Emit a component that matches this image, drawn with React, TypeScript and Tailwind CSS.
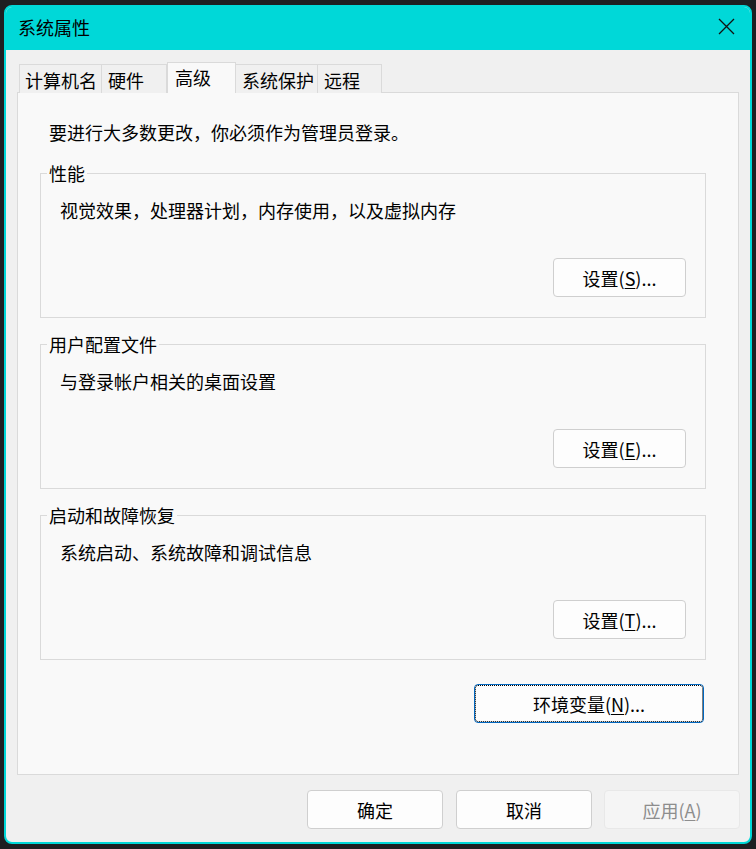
import React from "react";

const FONT = '"Noto Sans CJK SC", "Microsoft YaHei", sans-serif';

const TABS = [
  { label: "计算机名", w: "w-[83px]" },
  { label: "硬件", w: "w-[65px]" },
  { label: "高级", w: "w-[69px]", active: true },
  { label: "系统保护", w: "w-[82px]" },
  { label: "远程", w: "w-[64px]" },
];

const GROUPS = [
  { title: "性能", desc: "视觉效果，处理器计划，内存使用，以及虚拟内存", key: "S" },
  { title: "用户配置文件", desc: "与登录帐户相关的桌面设置", key: "E" },
  { title: "启动和故障恢复", desc: "系统启动、系统故障和调试信息", key: "T" },
];

function Mnemonic({ text, k }: { text: string; k: string }) {
  return (
    <>
      {text}(<span className="underline underline-offset-2">{k}</span>)
    </>
  );
}

export default function App() {
  return (
    <div
      className="w-[756px] h-[849px] bg-[#1e1f22] pl-[4px] pt-[5px] overflow-hidden text-black"
      style={{ fontFamily: FONT }}
    >
      <div className="w-[748px] h-[839px] border-2 border-[#00d8d8] rounded-[8px] overflow-hidden flex flex-col bg-[#f0f0f0]">
        {/* title bar */}
        <div className="h-[43px] shrink-0 bg-[#00d8d8] flex items-center justify-between pl-[12px] pr-[15px] pb-[4px]">
          <span className="text-[18px] leading-[24px]">系统属性</span>
          <svg width="17" height="17" viewBox="0 0 17 17" fill="none" stroke="#111" strokeWidth="1.3">
            <path d="M1 1 L16 16 M16 1 L1 16" />
          </svg>
        </div>

        {/* tabs */}
        <div className="flex items-end h-[31px] mt-[12px] ml-[13px] -mb-px relative z-10">
          {TABS.map((t) =>
            t.active ? (
              <div
                key={t.label}
                className={`${t.w} h-[31px] bg-[#f9f9f9] border border-b-0 border-[#dadada] pl-[7px] pt-[2px] text-[18px] leading-[24px]`}
              >
                {t.label}
              </div>
            ) : (
              <div
                key={t.label}
                className={`${t.w} h-[29px] border border-l-0 first:border-l first:pl-[5px] border-b-0 border-[#dadada] bg-[#f0f0f0] pl-[6px] pt-[3px] text-[18px] leading-[24px]`}
              >
                {t.label}
              </div>
            )
          )}
        </div>

        {/* panel */}
        <div className="ml-[11px] w-[722px] h-[683px] shrink-0 bg-[#f9f9f9] border border-[#dadada] pt-[27px] pl-[31px] pr-[33px]">
          <p className="text-[18px] leading-[24px]">要进行大多数更改，你必须作为管理员登录。</p>

          <div className="ml-[-9px] flex flex-col">
            {GROUPS.map((g, i) => (
              <fieldset
                key={g.title}
                className={`${i === 0 ? "mt-[17px]" : "mt-[14px]"} w-[666px] border border-[#dadada]`}
              >
                <legend className="ml-[6px] px-[2px] text-[18px] leading-[24px]">{g.title}</legend>
                <div className="px-[19px] pb-[20px]">
                  <p className="mt-[13px] text-[18px] leading-[24px]">{g.desc}</p>
                  <div className="mt-[36px] flex justify-end">
                    <button className="w-[133px] h-[39px] rounded-[4px] border border-[#cfcfcf] bg-[#fdfdfd] text-[18px] leading-[24px]">
                      <Mnemonic text="设置" k={g.key} />...
                    </button>
                  </div>
                </div>
              </fieldset>
            ))}

            <div className="mt-[24px] w-[666px] flex justify-end pr-[2px]">
              <button className="w-[230px] h-[39px] rounded-[4px] border border-[#0067c0] bg-[#fdfdfd] outline-1 outline-dotted outline-black -outline-offset-2 text-[18px] leading-[24px]">
                <Mnemonic text="环境变量" k="N" />...
              </button>
            </div>
          </div>
        </div>

        {/* footer buttons */}
        <div className="mt-[15px] flex justify-end gap-[12px] pr-[10px]">
          <button className="w-[136px] h-[39px] rounded-[4px] border border-[#cfcfcf] bg-[#fdfdfd] text-[18px] leading-[24px] mr-px">
            确定
          </button>
          <button className="w-[136px] h-[39px] rounded-[4px] border border-[#cfcfcf] bg-[#fdfdfd] text-[18px] leading-[24px]">
            取消
          </button>
          <button className="w-[136px] h-[39px] rounded-[4px] border border-[#e8e8e8] bg-[#f5f5f5] text-[#8d8d8d] text-[18px] leading-[24px]">
            <Mnemonic text="应用" k="A" />
          </button>
        </div>
      </div>
    </div>
  );
}
